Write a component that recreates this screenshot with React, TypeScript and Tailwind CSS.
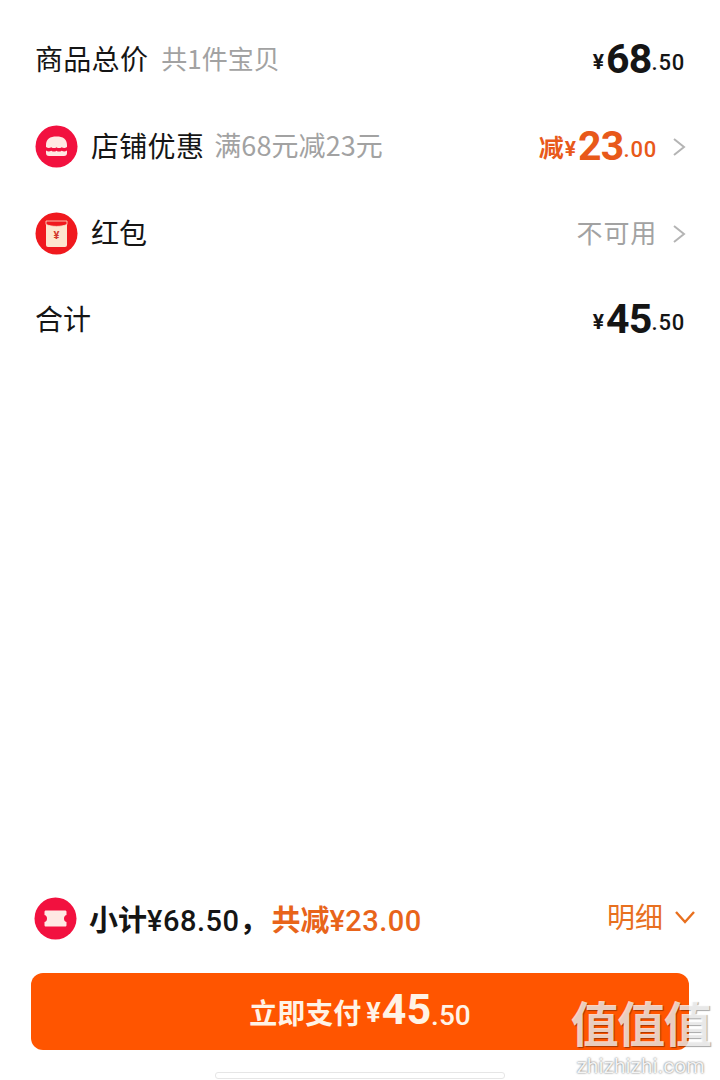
import React from "react";

const FONT = '"Noto Sans CJK SC", Roboto, sans-serif';

function Price({ big, small, color = "text-[#151515]" }: { big: string; small: string; color?: string }) {
  return (
    <span className={`flex items-end mb-[1px] ${color}`} style={{ fontFamily: 'Roboto, "Noto Sans CJK SC", sans-serif' }}>
      <span className="text-[21px] font-bold leading-none mr-[2px] mb-[7px]">¥</span>
      <span className="text-[41px] font-bold leading-none tracking-[-0.8px]">{big}</span>
      <span className="text-[22px] font-medium leading-none tracking-[0.8px] mb-[6px]">.{small}</span>
    </span>
  );
}

function Chevron({ ml }: { ml: string }) {
  return (
    <svg width="14" height="20" viewBox="0 0 14 20" fill="none" className={`${ml} mr-[-1px]`}>
      <path d="M2 2 L12 10 L2 18" stroke="#b4b4b4" strokeWidth="2" strokeLinejoin="miter" />
    </svg>
  );
}

function ShopIcon() {
  return (
    <svg width="43" height="43" viewBox="0 0 43 43">
      <circle cx="21.5" cy="21.5" r="21" fill="#f2113f" />
      <path d="M11 20 C11 14 15 11.5 21.5 11.5 C28 11.5 32 14 32 20 L32 22 C30 23.3 28.5 23.3 26.7 22.2 C25 23.4 23 23.4 21.5 22.2 C20 23.4 18 23.4 16.3 22.2 C14.5 23.3 13 23.3 11 22 Z" fill="#ffe9e4" />
      <path d="M11 25.5 C13 26.8 14.5 26.8 16.3 25.7 C18 26.9 20 26.9 21.5 25.7 C23 26.9 25 26.9 26.7 25.7 C28.5 26.8 30 26.8 32 25.5 L32 28 C32 30 31 31 29 31 L14 31 C12 31 11 30 11 28 Z" fill="#ffe9e4" />
    </svg>
  );
}

function RedPacketIcon() {
  return (
    <svg width="43" height="43" viewBox="0 0 43 43">
      <circle cx="21.5" cy="21.5" r="21" fill="#f0191e" />
      <rect x="11" y="9" width="21" height="26" rx="2" fill="#fde6cf" />
      <path d="M11 9 H32 V12.5 C26 15 17 15 11 12.5 Z" fill="#f0191e" stroke="#fde6cf" strokeWidth="0.8" />
      <text x="21.5" y="27" textAnchor="middle" fontSize="11" fontWeight="700" fill="#d2372d" fontFamily="Roboto, sans-serif">¥</text>
    </svg>
  );
}

function TicketIcon() {
  return (
    <svg width="43" height="43" viewBox="0 0 43 43">
      <circle cx="21.5" cy="21.5" r="21" fill="#f2113f" />
      <path d="M10.5 15 C10.5 14 11 13.5 12 13.5 L31 13.5 C32 13.5 32.5 14 32.5 15 L32.5 18 C30.5 18.5 30 20 30 21.5 C30 23 30.5 24.5 32.5 25 L32.5 28 C32.5 29 32 29.5 31 29.5 L12 29.5 C11 29.5 10.5 29 10.5 28 L10.5 25 C12.5 24.5 13 23 13 21.5 C13 20 12.5 18.5 10.5 18 Z" fill="#ffe9e4" />
    </svg>
  );
}

function Row({ children }: { children: React.ReactNode }) {
  return <div className="h-[86.67px] flex items-center justify-between">{children}</div>;
}

export default function App() {
  return (
    <div className="relative w-[720px] h-[1080px] bg-white overflow-hidden flex flex-col" style={{ fontFamily: FONT }}>
      <div className="pt-[17px] pl-[35px] pr-[35px]">
        <Row>
          <div className="flex items-center mb-[4px]">
            <span className="text-[28px] leading-none text-[#151515] tracking-[0.3px]">商品总价</span>
            <span className="text-[26px] leading-none text-[#a2a2a2] ml-[13px]">共1件宝贝</span>
          </div>
          <Price big="68" small="50" />
        </Row>
        <Row>
          <div className="flex items-center">
            <ShopIcon />
            <span className="text-[28px] leading-none text-[#151515] ml-[13px] mb-[4px] tracking-[0.3px]">店铺优惠</span>
            <span className="text-[27px] leading-none text-[#a2a2a2] ml-[10px] mb-[4px] tracking-[0.1px]">满68元减23元</span>
          </div>
          <div className="flex items-center">
            <span className="flex items-end text-[#e8591a]">
              <span className="text-[25px] font-bold leading-none mb-[9px] mr-[1px]">减</span>
              <Price big="23" small="00" color="text-[#e8591a]" />
            </span>
            <Chevron ml="ml-[15px]" />
          </div>
        </Row>
        <Row>
          <div className="flex items-center">
            <RedPacketIcon />
            <span className="text-[28px] leading-none text-[#151515] ml-[13px] mb-[4px]">红包</span>
          </div>
          <div className="flex items-center">
            <span className="text-[26px] leading-none text-[#a2a2a2] tracking-[0.8px] mb-[4px]">不可用</span>
            <Chevron ml="ml-[15px]" />
          </div>
        </Row>
        <Row>
          <span className="text-[28px] leading-none text-[#151515] mb-[4px]">合计</span>
          <Price big="45" small="50" />
        </Row>
      </div>

      <div className="mt-auto flex flex-col">
        <div className="h-[44px] pl-[34px] pr-[24px] flex items-center justify-between">
          <div className="flex items-center">
            <TicketIcon />
            <span className="flex items-baseline mt-[4px]">
              <span className="ml-[12px] text-[29px] font-bold leading-none text-[#151515]">小计</span>
              <span className="text-[29px] font-medium leading-none text-[#151515] tracking-[0.5px]" style={{ fontFamily: 'Roboto, sans-serif' }}>¥68.50</span>
              <span className="text-[29px] font-bold leading-none text-[#151515] w-[32px]">，</span>
              <span className="text-[29px] font-bold leading-none text-[#e8641a]">共减</span>
              <span className="text-[29px] font-medium leading-none text-[#e8641a] tracking-[0.5px]" style={{ fontFamily: 'Roboto, sans-serif' }}>¥23.00</span>
            </span>
          </div>
          <div className="flex items-center text-[#e8701f]">
            <span className="text-[28px] leading-none mb-[4px]">明细</span>
            <svg width="22" height="14" viewBox="0 0 22 14" fill="none" className="ml-[11px] mb-[2px]">
              <path d="M2 2 L11 12 L20 2" stroke="#e8701f" strokeWidth="2.4" />
            </svg>
          </div>
        </div>
        <div className="mt-[33px] ml-[31px] mr-[31px] h-[77px] rounded-[12px] bg-[#ff5500] flex items-center justify-center text-[#fff3e6]">
          <span className="text-[28px] font-bold leading-none">立即支付</span>
          <span className="flex items-end ml-[5px] mb-[4px]" style={{ fontFamily: 'Roboto, sans-serif' }}>
            <span className="text-[27px] font-bold leading-none mr-[1px] mb-[4px]">¥</span>
            <span className="text-[43px] font-bold leading-none">45</span>
            <span className="text-[28px] font-medium leading-none mb-[1px]">.50</span>
          </span>
        </div>
        <div className="mt-[22px] mb-[1px] mx-auto w-[290px] h-[7px] rounded-[3px] border border-[#e6e6e6] bg-white" />
      </div>

      <div className="absolute left-[569px] top-[996px] w-[143px] flex flex-col items-center pointer-events-none">
        <span className="text-[48px] font-bold leading-[50px] tracking-[-1.5px] text-white/75 whitespace-nowrap [text-shadow:1px_1px_1px_rgba(0,0,0,0.35)]">值值值</span>
        <span className="text-[21px] leading-[24px] text-white/90 whitespace-nowrap mt-[8px] [text-shadow:0_0_2px_rgba(0,0,0,0.7)]" style={{ fontFamily: 'Roboto, sans-serif' }}>zhizhizhi.com</span>
      </div>
    </div>
  );
}
